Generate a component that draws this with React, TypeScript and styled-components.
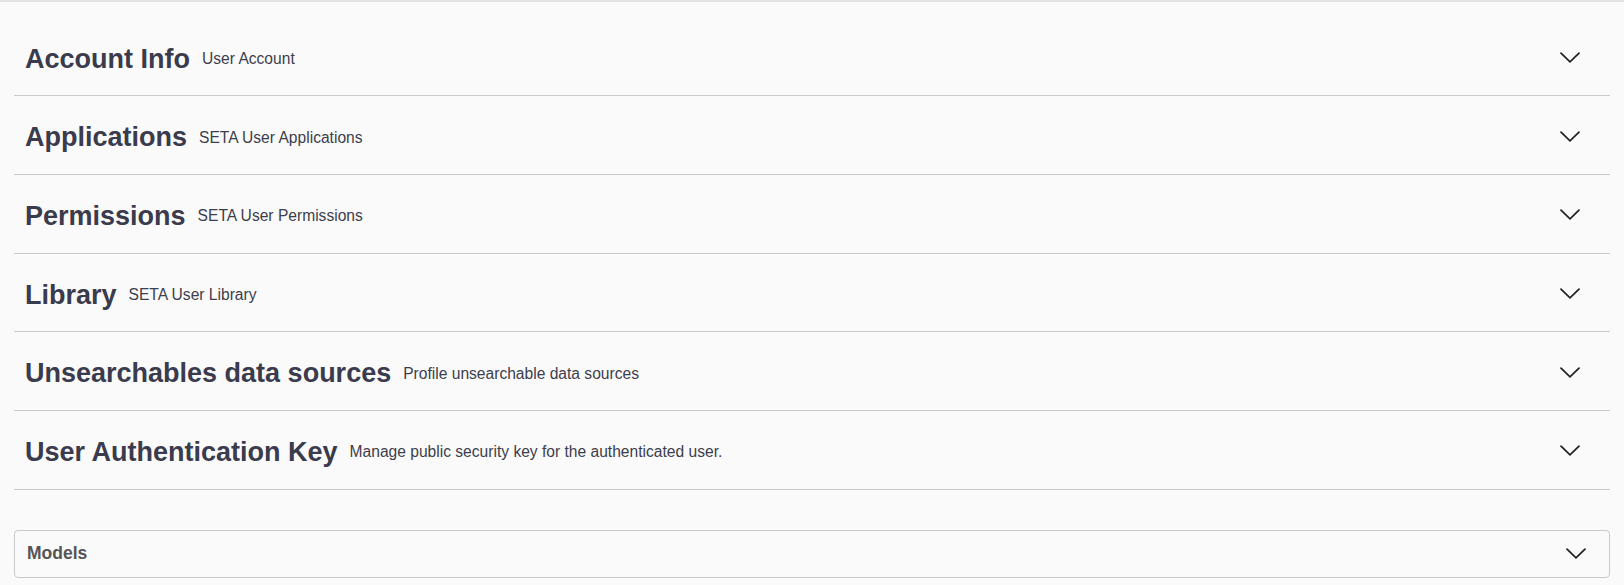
import React from "react";
import styled, { createGlobalStyle } from "styled-components";

const GlobalStyle = createGlobalStyle`
  html, body {
    margin: 0;
    padding: 0;
    background: #fafafa;
    font-family: "Liberation Sans", Arial, sans-serif;
  }
`;

const Page = styled.div`
  min-height: 585px;
  background: #fafafa;
  border-top: 2px solid #e2e2e2;
  box-sizing: border-box;
`;

const Content = styled.div`
  padding: 15.6px 14px 0 14px;
  display: flex;
  flex-direction: column;
`;

const Section = styled.div`
  display: flex;
  align-items: center;
  height: 78.7px;
  box-sizing: border-box;
  border-bottom: 1px solid #c9c9c9;
  padding: 0 30px 0 11px;
`;

const TitleGroup = styled.div`
  display: flex;
  align-items: center;
  gap: 12px;
  flex: 1;
  min-width: 0;
  padding-top: 5px;
`;

const Title = styled.h2`
  margin: 0;
  font-size: 27px;
  font-weight: 700;
  color: #3a3b4c;
  line-height: 1.2;
`;

const Subtitle = styled.span`
  font-size: 15.6px;
  color: #3d3e4c;
`;

const ChevronWrap = styled.span<{ $offset?: number }>`
  display: inline-flex;
  margin-top: ${(p) => p.$offset ?? 0}px;
`;

const ModelsBox = styled.div`
  margin-top: 40px;
  height: 48px;
  box-sizing: border-box;
  border: 1px solid #c9c9c9;
  border-radius: 4px;
  display: flex;
  align-items: center;
  padding: 0 23px 0 12px;
`;

const ModelsLabel = styled.span`
  flex: 1;
  font-size: 17.5px;
  font-weight: 700;
  color: #555;
`;

const Chevron = ({ offset }: { offset?: number }) => (
  <ChevronWrap $offset={offset}>
    <svg width="20" height="11" viewBox="0 0 20 11" fill="none">
      <polyline
        points="1,1.2 10,9.8 19,1.2"
        stroke="#1f1f1f"
        strokeWidth="1.7"
        strokeLinecap="round"
        strokeLinejoin="miter"
      />
    </svg>
  </ChevronWrap>
);

const sections = [
  { title: "Account Info", sub: "User Account" },
  { title: "Applications", sub: "SETA User Applications" },
  { title: "Permissions", sub: "SETA User Permissions" },
  { title: "Library", sub: "SETA User Library" },
  { title: "Unsearchables data sources", sub: "Profile unsearchable data sources" },
  { title: "User Authentication Key", sub: "Manage public security key for the authenticated user." },
];

export default function App() {
  return (
    <>
      <GlobalStyle />
      <Page>
        <Content>
          {sections.map((s) => (
            <Section key={s.title}>
              <TitleGroup>
                <Title>{s.title}</Title>
                <Subtitle>{s.sub}</Subtitle>
              </TitleGroup>
              <Chevron offset={2} />
            </Section>
          ))}
          <ModelsBox>
            <ModelsLabel>Models</ModelsLabel>
            <Chevron />
          </ModelsBox>
        </Content>
      </Page>
    </>
  );
}
